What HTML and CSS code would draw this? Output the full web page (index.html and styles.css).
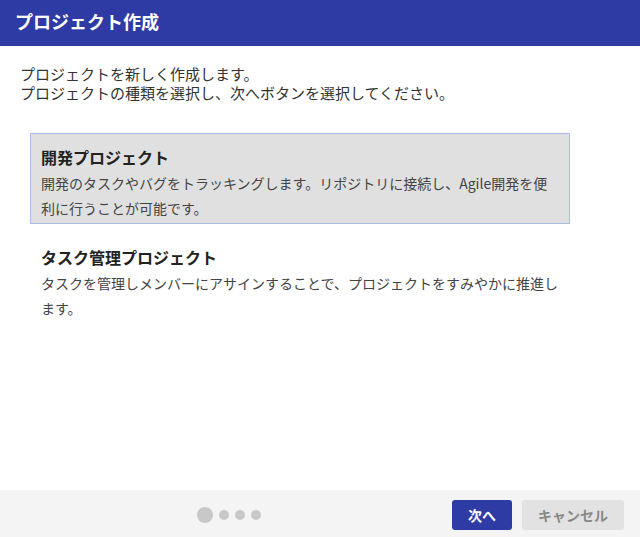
FILE: index.html
```html
<!DOCTYPE html>
<html lang="ja">
<head>
  <meta charset="UTF-8">
  <title>プロジェクト作成</title>
  <link rel="stylesheet" href="styles.css">
</head>
<body>

  <div id="header">プロジェクト作成</div>

  <div id="content">
    <p class="intro">
      プロジェクトを新しく作成します。<br>
      プロジェクトの種類を選択し、次へボタンを選択してください。
    </p>

    <div class="types">
      <div class="type selected">
        <div class="type-title">開発プロジェクト</div>
        <div class="type-desc">開発のタスクやバグをトラッキングします。リポジトリに接続し、Agile開発を便利に行うことが可能です。</div>
      </div>
      <div class="type">
        <div class="type-title">タスク管理プロジェクト</div>
        <div class="type-desc">タスクを管理しメンバーにアサインすることで、プロジェクトをすみやかに推進します。</div>
      </div>
    </div>
  </div>

  <div id="footer">
    <div class="steps">
      <span class="dot current"></span>
      <span class="dot"></span>
      <span class="dot"></span>
      <span class="dot"></span>
    </div>
    <button class="btn primary">次へ</button>
    <button class="btn">キャンセル</button>
  </div>

</body>
</html>
```

FILE: styles.css
```css
body {
  margin: 0;
  height: 100vh;
  display: flex;
  flex-direction: column;
  font-family: "Noto Sans CJK JP", "Noto Sans", sans-serif;
  color: #333;
  background: #fff;
}
#header {
  height: 46px;
  line-height: 42px;
  padding-left: 15px;
  background: #2e3ba4;
  color: #fff;
  font-size: 18px;
  font-weight: bold;
}
#content {
  flex: 1;
  padding: 18px 20px 0;
}
.intro {
  margin: 0;
  font-size: 15px;
  line-height: 19px;
  color: #333;
}
.types {
  margin: 31px 0 0 10px;
  width: 540px;
  display: flex;
  flex-direction: column;
  gap: 9px;
}
.type {
  border: 1px solid transparent;
  padding: 12px 8px 2px 10px;
  cursor: pointer;
}
.type.selected {
  background: #e0e0e0;
  border-color: #a8bbe6;
}
.type-title {
  font-size: 16px;
  font-weight: bold;
  line-height: 22px;
  color: #222;
}
.type-desc {
  margin-top: 3px;
  font-size: 14px;
  line-height: 25px;
  color: #444;
}
#footer {
  height: 47px;
  flex-shrink: 0;
  background: #f4f4f4;
  display: flex;
  align-items: center;
  gap: 10px;
  padding: 3px 16px 0;
  box-sizing: border-box;
}
.steps {
  flex: 1;
  display: flex;
  justify-content: center;
  align-items: center;
  gap: 6px;
}
.dot {
  width: 10px;
  height: 10px;
  border-radius: 50%;
  background: #c8c8c8;
}
.dot.current {
  width: 16px;
  height: 16px;
}
.btn {
  height: 30px;
  padding: 0 16px;
  border: none;
  border-radius: 3px;
  background: #e2e2e2;
  color: #888;
  font-family: inherit;
  font-size: 14px;
  font-weight: bold;
}
.btn.primary {
  background: #2e3ba4;
  color: #fff;
}
```
